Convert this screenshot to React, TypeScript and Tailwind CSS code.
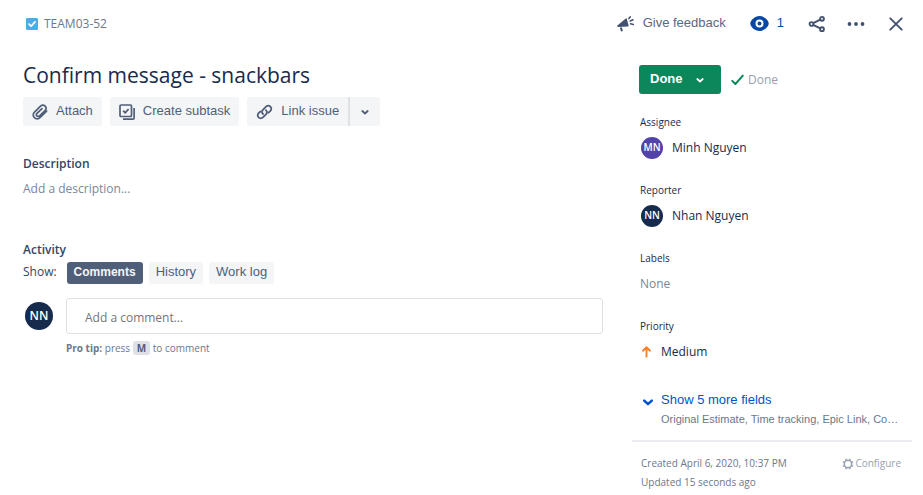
import React from "react";

const ui = "font-['Liberation_Sans',Arial,sans-serif]";

function Chevron({ className }: { className: string }) {
  return (
    <svg viewBox="0 0 10 10" className={className} fill="none" stroke="currentColor" strokeWidth="1.8" strokeLinecap="round" strokeLinejoin="round" aria-hidden="true">
      <path d="M2.3 4 L5 6.500 L7.700 4" />
    </svg>
  );
}

function Avatar({ initials, className }: { initials: string; className: string }) {
  return (
    <span className={`flex shrink-0 items-center justify-center rounded-full font-semibold text-white ${className}`}>
      {initials}
    </span>
  );
}

function Field({ label, children }: { label: string; children: React.ReactNode }) {
  return (
    <div>
      <dt className="mb-1.5 text-[10px] leading-4 font-medium text-[#172b4d]">{label}</dt>
      <dd className="flex h-6 items-center text-xs text-[#172b4d]">{children}</dd>
    </div>
  );
}

function Header() {
  return (
    <header className="flex h-[47px] items-center justify-between pr-5 pl-[26px] text-[#42526e]">
      <a href="#issue" className="flex items-center gap-1.5 text-xs text-[#6b778c]">
        <svg viewBox="0 0 12 12" className="size-3" aria-hidden="true">
          <rect width="12" height="12" rx="1.2" fill="#4bade8" />
          <path d="M3 6.2 L5.1 8.2 L9 3.9" fill="none" stroke="#fff" strokeWidth="1.7" strokeLinecap="round" strokeLinejoin="round" />
        </svg>
        TEAM03-52
      </a>
      <div className={`flex items-center text-[13px] ${ui}`}>
        <button type="button" className="flex items-center gap-2 text-[#5a6880]">
          <svg viewBox="0 0 18 18" className="size-[18px] text-[#42526e]" aria-hidden="true">
            <path d="M.4 10.400 L8.800 3.400 Q9.600 2.900 9.900 3.900 L11.600 10.600 Q11.700 11.600 10.800 11.600 L1 12 Q-.2 11.400 .4 10.400Z" fill="currentColor" />
            <path d="M3.800 12.500 L5 16.300" stroke="currentColor" strokeWidth="2" />
            <path d="M11.900 3.600 L13.200 1.900 M13.200 6 L16 4.800 M13.600 8.800 L16.300 9.500" stroke="currentColor" strokeWidth="1.600" strokeLinecap="round" />
          </svg>
          <span className="pb-0.5">Give feedback</span>
        </button>
        <button type="button" className="ml-6 flex items-center gap-2 text-[#0747a6]">
          <svg viewBox="0 0 19 15" className="h-[15px] w-[19px]" aria-hidden="true">
            <path d="M9.500 0 C14.200 0 18.700 4.500 18.700 7.500 S14.200 15 9.500 15 .3 10.500 .3 7.500 4.800 0 9.500 0Z" fill="currentColor" />
            <circle cx="9.500" cy="7.500" r="3" fill="none" stroke="#fff" strokeWidth="2" />
          </svg>
          <span className="pb-0.5">1</span>
        </button>
        <button type="button" aria-label="Share" className="ml-6">
          <svg viewBox="0 0 18 18" className="size-[18px]" fill="none" stroke="currentColor" strokeWidth="1.900" aria-hidden="true">
            <circle cx="3.500" cy="9" r="1.900" />
            <circle cx="14" cy="3.800" r="1.900" />
            <circle cx="14" cy="14.200" r="1.900" />
            <path d="M5.200 8.200 L12.300 4.700 M5.200 9.800 L12.300 13.300" />
          </svg>
        </button>
        <button type="button" aria-label="Actions" className="ml-[21px]">
          <svg viewBox="0 0 18 18" className="size-[18px]" fill="currentColor" aria-hidden="true">
            <circle cx="2.500" cy="9" r="1.900" />
            <circle cx="9" cy="9" r="1.900" />
            <circle cx="15.500" cy="9" r="1.900" />
          </svg>
        </button>
        <button type="button" aria-label="Close" className="ml-6">
          <svg viewBox="0 0 14 14" className="size-3.5" fill="none" stroke="currentColor" strokeWidth="1.900" strokeLinecap="round" aria-hidden="true">
            <path d="M1.300 1.300 L12.700 12.700 M12.700 1.300 L1.300 12.700" />
          </svg>
        </button>
      </div>
    </header>
  );
}

function Toolbar() {
  const button = "flex h-[29px] items-center rounded-[3px] bg-[#f4f5f7]";
  return (
    <div className={`mt-2 flex gap-2 text-[13px] text-[#505f79] ${ui}`}>
      <button type="button" className={`${button} gap-2 px-[9px]`}>
        <svg viewBox="0 0 16 16" className="size-4" fill="none" stroke="currentColor" strokeWidth="1.700" strokeLinecap="round" aria-hidden="true">
          <path d="M14.600 7.200 L8.200 13.500 C6.400 15.300 4 15.300 2.400 13.700 C.8 12.100 .8 9.800 2.500 8.100 L8.500 2.200 C9.900 .9 11.900 .9 13.100 2.100 C14.300 3.300 14.300 5.200 13 6.500 L7.600 11.800 C6.800 12.600 5.600 12.600 4.900 11.900 C4.200 11.200 4.300 10.100 5 9.400 L10 4.600" />
        </svg>
        <span className="pb-0.5">Attach</span>
      </button>
      <button type="button" className={`${button} gap-2 px-[9px]`}>
        <svg viewBox="0 0 16 16" className="size-4" fill="none" stroke="currentColor" strokeWidth="1.700" strokeLinejoin="round" aria-hidden="true">
          <rect x="1" y="1" width="11.500" height="11.500" rx="1" />
          <path d="M15.100 4 V14 Q15.100 15.100 14 15.100 H4" />
          <path d="M4.200 6.700 L6.200 8.800 L9.600 5" strokeWidth="1.800" />
        </svg>
        <span className="pb-0.5">Create subtask</span>
      </button>
      <div className="flex">
        <button type="button" className={`${button} gap-2 rounded-r-none px-[9px]`}>
          <svg viewBox="0 0 17 16" className="h-4 w-[17px]" fill="none" stroke="currentColor" strokeWidth="1.800" strokeLinecap="round" aria-hidden="true">
            <path d="M7 10 C5.700 8.700 5.700 7 6.900 5.800 L10 2.700 C11.300 1.500 13.200 1.500 14.400 2.700 C15.600 3.900 15.600 5.700 14.400 6.900 L12.600 8.700" />
            <path d="M9.900 6.200 C11.200 7.500 11.200 9.200 10 10.400 L6.900 13.400 C5.700 14.600 3.800 14.600 2.600 13.400 C1.400 12.200 1.400 10.400 2.600 9.200 L4.400 7.500" />
          </svg>
          <span className="pb-0.5">Link issue</span>
        </button>
        <button type="button" aria-label="More link options" className={`${button} rounded-l-none border-l-2 border-[#dfe1e6] px-2.5`}>
          <Chevron className="size-2.5" />
        </button>
      </div>
    </div>
  );
}

function Activity() {
  const tab = "h-[22px] rounded-[3px] px-[7px] pb-[3px]";
  return (
    <section className="mt-[43px]">
      <h2 className="text-xs leading-[18px] font-semibold text-[#344563]">Activity</h2>
      <div className="mt-[3px] flex items-center text-xs text-[#344563]">
        <span className="mr-2.5 pb-0.5">Show:</span>
        <div className={`flex gap-1.5 text-[13px] text-[#505f79] ${ui}`}>
          <button type="button" className={`${tab} bg-[#505f79] text-xs font-bold text-[#f4f5f7]`}>Comments</button>
          <button type="button" className={`${tab} bg-[#f4f5f7]`}>History</button>
          <button type="button" className={`${tab} bg-[#f4f5f7]`}>Work log</button>
        </div>
      </div>
      <div className="mt-3.5 flex gap-[13px]">
        <div className="flex h-9 items-center pl-0.5">
          <Avatar initials="NN" className="size-7 bg-[#172b4d] text-xs" />
        </div>
        <div className="min-w-0 flex-1">
          <input type="text" aria-label="Comment" placeholder="Add a comment…" className="block h-9 w-full rounded-[3px] border border-[#dfe1e6] px-[18px] pt-0.5 text-xs text-[#172b4d] placeholder:text-[#757575]" />
          <p className="mt-1.5 text-[10px] leading-4 text-[#6b778c]">
            <strong className="font-bold">Pro tip:</strong> press{" "}
            <kbd className="rounded-[3px] bg-[#dfe1e6] px-1 font-['Open_Sans',sans-serif] text-[10px] font-bold text-[#505f79]">M</kbd> to comment
          </p>
        </div>
      </div>
    </section>
  );
}

function Sidebar() {
  return (
    <aside className="w-[280px] shrink-0">
      <div className="px-2">
        <div className="mt-[18px] flex items-center gap-2.5">
          <button type="button" className={`-ml-px flex h-[29px] w-[82px] items-center justify-between rounded-[3px] bg-[#0b875b] pr-4 pl-[11px] text-[13px] font-bold text-white ${ui}`}>
            <span className="pb-0.5">Done</span>
            <Chevron className="size-2.5" />
          </button>
          <span className="flex items-center gap-1 text-xs text-[#97a0af]">
            <svg viewBox="0 0 13 12" className="h-3 w-[13px]" fill="none" stroke="#00875a" strokeWidth="1.900" strokeLinecap="round" strokeLinejoin="round" aria-hidden="true">
              <path d="M1.200 6.800 L4.400 10 L11.800 1.600" />
            </svg>
            Done
          </span>
        </div>
        <dl className="mt-5 flex flex-col gap-[22px]">
          <Field label="Assignee">
            <Avatar initials="MN" className="mr-[9px] ml-px size-[22px] bg-[#5243aa] text-[10px]" />
            Minh Nguyen
          </Field>
          <Field label="Reporter">
            <Avatar initials="NN" className="mr-[9px] ml-px size-[22px] bg-[#172b4d] text-[10px]" />
            Nhan Nguyen
          </Field>
          <Field label="Labels">
            <span className="text-[#7a869a]">None</span>
          </Field>
          <Field label="Priority">
            <svg viewBox="0 0 12 12" className="mr-[9px] size-3" fill="none" stroke="#f5822a" strokeWidth="1.900" strokeLinecap="round" strokeLinejoin="round" aria-hidden="true">
              <path d="M6.500 10.500 V1.500 M3 4.700 L6.500 1.300 L10 4.700" />
            </svg>
            Medium
          </Field>
        </dl>
        <button type="button" className={`mt-[26px] flex w-full gap-1.5 pl-px text-left ${ui}`}>
          <Chevron className="mt-[5px] size-3.5 shrink-0 text-[#0052cc]" />
          <span className="min-w-0 flex-1">
            <span className="block text-[13px] leading-5 text-[#0052cc]">Show 5 more fields</span>
            <span className="block text-[11px] leading-[18px] text-[#6b778c]">Original Estimate, Time tracking, Epic Link, Co…</span>
          </span>
        </button>
      </div>
      <footer className="mt-3 flex items-start justify-between border-t-2 border-[#ebecf0] pt-3 pr-[11px] pl-[9px] text-[10px] leading-[19px] text-[#6b778c]">
        <div>
          <p>Created April 6, 2020, 10:37 PM</p>
          <p>Updated 15 seconds ago</p>
        </div>
        <button type="button" className="flex items-center gap-px text-[#97a0af]">
          <svg viewBox="0 0 12 12" className="size-3" fill="none" stroke="currentColor" aria-hidden="true">
            <circle cx="6" cy="6" r="3.700" strokeWidth="1.500" />
            <path d="M4 .8 V2.500 M8 .8 V2.500 M4 9.500 V11.200 M8 9.500 V11.200 M.8 4 H2.500 M.8 8 H2.500 M9.500 4 H11.200 M9.500 8 H11.200" strokeWidth="1.400" />
          </svg>
          Configure
        </button>
      </footer>
    </aside>
  );
}

export default function App() {
  return (
    <div className="min-h-screen bg-white font-['Open_Sans','Noto_Sans',sans-serif]">
      <Header />
      <div className="flex gap-[29px] pr-[11px] pl-[23px]">
        <main className="min-w-0 flex-1 pt-3.5">
          <h1 className="text-[21px] leading-7 font-medium text-[#172b4d]">Confirm message - snackbars</h1>
          <Toolbar />
          <section className="mt-[29px]">
            <h2 className="text-xs leading-[18px] font-semibold text-[#344563]">Description</h2>
            <p className="mt-[7px] text-xs leading-[18px] text-[#7a869a]">Add a description...</p>
          </section>
          <Activity />
        </main>
        <Sidebar />
      </div>
    </div>
  );
}
